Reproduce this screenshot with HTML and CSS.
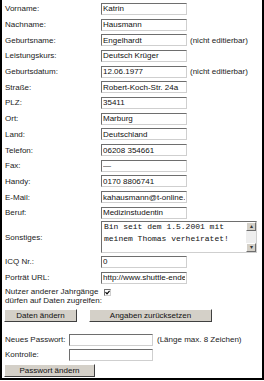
FILE: index.html
```html
<!DOCTYPE html>
<html lang="de">
<head>
    <meta charset="UTF-8">
    <meta name="viewport" content="width=device-width, initial-scale=1.0">
    <title>Profil bearbeiten</title>
    <link rel="stylesheet" href="styles.css">
</head>
<body>
    <div class="frame">
        <form class="profile">
            <div class="row"><label>Vorname:</label><input type="text" value="Katrin"></div>
            <div class="row"><label>Nachname:</label><input type="text" value="Hausmann"></div>
            <div class="row"><label>Geburtsname:</label><input type="text" value="Engelhardt" readonly><span class="note">(nicht editierbar)</span></div>
            <div class="row"><label>Leistungskurs:</label><input type="text" value="Deutsch Krüger"></div>
            <div class="row"><label>Geburtsdatum:</label><input type="text" value="12.06.1977" readonly><span class="note">(nicht editierbar)</span></div>
            <div class="row"><label>Straße:</label><input type="text" value="Robert-Koch-Str. 24a"></div>
            <div class="row"><label>PLZ:</label><input type="text" value="35411"></div>
            <div class="row"><label>Ort:</label><input type="text" value="Marburg"></div>
            <div class="row"><label>Land:</label><input type="text" value="Deutschland"></div>
            <div class="row"><label>Telefon:</label><input type="text" value="06208 354661"></div>
            <div class="row"><label>Fax:</label><input type="text" value="—"></div>
            <div class="row"><label>Handy:</label><input type="text" value="0170 8806741"></div>
            <div class="row"><label>E-Mail:</label><input type="text" value="kahausmann@t-online.de"></div>
            <div class="row"><label>Beruf:</label><input type="text" value="Medizinstudentin"></div>
            <div class="row row-memo">
                <label>Sonstiges:</label>
                <div class="memo">
                    <div class="memo-text">Bin seit dem 1.5.2001 mit
meinem Thomas verheiratet!</div>
                    <div class="memo-bar">
                        <span class="bar-btn">&#9652;</span>
                        <span class="bar-track"></span>
                        <span class="bar-btn">&#9662;</span>
                    </div>
                </div>
            </div>
            <div class="row"><label>ICQ Nr.:</label><input type="text" value="0"></div>
            <div class="row"><label>Porträt URL:</label><input type="text" value="http://www.shuttle-endeavour.de/foto.jpg"></div>
            <div class="access">
                <label>Nutzer anderer Jahrgänge dürfen auf Daten zugreifen:</label>
                <span class="check">
                    <svg width="5" height="5" viewBox="0 0 5 5"><path d="M0.5 2.2 L2 3.8 L4.6 0.8" fill="none" stroke="#000" stroke-width="1.2"/></svg>
                </span>
            </div>
            <div class="actions">
                <button type="button" class="btn btn-save">Daten ändern</button>
                <button type="button" class="btn btn-reset">Angaben zurücksetzen</button>
            </div>
        </form>

        <form class="password">
            <div class="pw-row"><label>Neues Passwort:</label><input type="password"><span class="note">(Länge max. 8 Zeichen)</span></div>
            <div class="pw-row"><label>Kontrolle:</label><input type="password"></div>
            <button type="button" class="btn btn-pw">Passwort ändern</button>
        </form>
    </div>
</body>
</html>
```

FILE: styles.css
```css
body {
    margin: 0;
    background-color: #ffffff;
    font-family: "Liberation Sans", Arial, sans-serif;
    font-size: 8px;
    color: #222222;
}
.frame {
    width: 264px;
    height: 380px;
    box-sizing: border-box;
    border: 2px solid #000000;
    border-top: 0;
    background-color: #ffffff;
}
.profile {
    padding-top: 1px;
    margin: 0;
}
.row {
    display: flex;
    align-items: center;
    height: 15.7px;
    padding-left: 3px;
}
.row label {
    width: 96px;
    flex: none;
}
input {
    box-sizing: border-box;
    width: 86px;
    height: 12px;
    margin: 0;
    padding: 0 1px;
    border: 1px solid;
    border-color: #6e6e6e #cfcfcf #cfcfcf #6e6e6e;
    font-family: "Liberation Sans", Arial, sans-serif;
    font-size: 8px;
    color: #111111;
    background-color: #ffffff;
    outline: none;
}
.note {
    margin-left: 3px;
}
.row-memo {
    height: 33.5px;
}
.memo {
    display: flex;
    box-sizing: border-box;
    width: 156px;
    height: 32px;
    border: 1px solid;
    border-color: #6e6e6e #cfcfcf #cfcfcf #6e6e6e;
}
.memo-text {
    flex: 1;
    margin-top: -1.5px;
    padding: 0 2px;
    font-family: "Liberation Mono", "Courier New", monospace;
    font-size: 8px;
    line-height: 12px;
    white-space: pre;
    overflow: hidden;
    color: #111111;
}
.memo-bar {
    width: 10px;
    display: flex;
    flex-direction: column;
    background-color: #eeeeee;
}
.bar-btn {
    box-sizing: border-box;
    height: 9px;
    border: 1px solid;
    border-color: #ffffff #6e6e6e #6e6e6e #ffffff;
    background-color: #d4d0c8;
    font-size: 6px;
    line-height: 7px;
    text-align: center;
    color: #333333;
}
.bar-track {
    flex: 1;
}
.access {
    display: flex;
    margin-top: 1.3px;
    padding-left: 3px;
}
.access label {
    width: 99px;
    line-height: 9.5px;
}
.check {
    box-sizing: border-box;
    width: 7px;
    height: 7px;
    margin-top: 2px;
    border: 1px solid;
    border-color: #6e6e6e #cfcfcf #cfcfcf #6e6e6e;
    display: flex;
    align-items: center;
    justify-content: center;
}
.actions {
    display: flex;
    gap: 12px;
    margin-top: 3px;
    padding-left: 2px;
}
.btn {
    box-sizing: border-box;
    height: 13px;
    padding: 0;
    border: 1px solid;
    border-color: #ffffff #404040 #404040 #ffffff;
    background-color: #d4d0c8;
    font-family: "Liberation Sans", Arial, sans-serif;
    font-size: 8px;
    color: #111111;
}
.btn-save {
    width: 73px;
}
.btn-reset {
    width: 123px;
}
.password {
    margin: 10.5px 0 0;
    padding-left: 2px;
}
.pw-row {
    display: flex;
    align-items: center;
    height: 15px;
    padding-left: 1px;
}
.pw-row label {
    width: 64px;
    flex: none;
}
.pw-row input {
    width: 84px;
}
.pw-row .note {
    margin-left: 4px;
}
.btn-pw {
    width: 91px;
    margin-top: 1.5px;
}
```
